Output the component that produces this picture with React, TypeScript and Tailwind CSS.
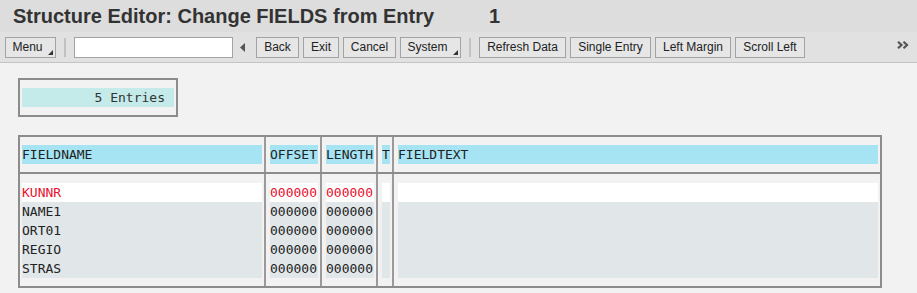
import React from "react";

const mono = { fontFamily: '"DejaVu Sans Mono", "Liberation Mono", monospace' };
const sans = { fontFamily: '"Liberation Sans", Arial, sans-serif' };

function Btn({ label, w, menu }: { label: string; w: number; menu?: boolean }) {
  return (
    <div
      className="relative flex h-[21px] shrink-0 items-center justify-center border border-[#a3a3a3] bg-[#e6e6e6] text-[12px] text-[#222]"
      style={{ width: w }}
    >
      <span className={menu ? "pr-[6px]" : ""}>{label}</span>
      {menu && (
        <svg className="absolute bottom-[2px] right-[2px]" width="5" height="5" viewBox="0 0 5 5">
          <polygon points="5,0 5,5 0,5" fill="#333" />
        </svg>
      )}
    </div>
  );
}

function Sep() {
  return <div className="mx-[8px] h-[19px] w-[2px] shrink-0 bg-[#c2c2c2]" />;
}

const rows = ["KUNNR", "NAME1", "ORT01", "REGIO", "STRAS"];

export default function App() {
  const cols = [
    { w: 246, pl: 2, key: "FIELDNAME" },
    { w: 56, pl: 4, key: "OFFSET" },
    { w: 56, pl: 4, key: "LENGTH" },
    { w: 16, pl: 4, key: "T" },
    { w: 486, pl: 4, key: "FIELDTEXT" },
  ];
  const cellVal = (ci: number, r: string) => {
    if (ci === 0) return r;
    if (ci === 1 || ci === 2) return "000000";
    return "";
  };
  return (
    <div className="h-[293px] w-[917px] overflow-hidden bg-[#f2f2f2]" style={sans}>
      {/* Title */}
      <div className="flex h-[32px] items-center bg-[#dddddd] pl-[13px] text-[20px] font-bold text-[#333]">
        <div className="w-[476px] whitespace-nowrap">Structure Editor: Change FIELDS from Entry</div>
        <div>1</div>
      </div>
      {/* Toolbar */}
      <div className="flex h-[31px] items-center border-b border-[#c4c4c4] bg-[#e1e1e1] pl-[5px] pr-[8px]">
        <Btn label="Menu" w={51} menu />
        <Sep />
        <div className="h-[21px] w-[159px] shrink-0 border border-[#a3a3a3] bg-white" />
        <svg className="ml-[7px] shrink-0" width="5" height="9" viewBox="0 0 5 9">
          <polygon points="5,0 5,9 0,4.5" fill="#555" />
        </svg>
        <div className="ml-[11px] flex gap-[4px]">
          <Btn label="Back" w={43} />
          <Btn label="Exit" w={36} />
          <Btn label="Cancel" w={53} />
          <Btn label="System" w={61} menu />
        </div>
        <Sep />
        <div className="flex gap-[4px]">
          <Btn label="Refresh Data" w={87} />
          <Btn label="Single Entry" w={81} />
          <Btn label="Left Margin" w={76} />
          <Btn label="Scroll Left" w={70} />
        </div>
        <svg className="mb-[5px] ml-auto shrink-0" width="12" height="8" viewBox="0 0 12 8">
          <polyline points="1,0.8 4.5,4 1,7.2" fill="none" stroke="#555" strokeWidth="2.2" />
          <polyline points="6.5,0.8 10,4 6.5,7.2" fill="none" stroke="#555" strokeWidth="2.2" />
        </svg>
      </div>
      {/* Content */}
      <div className="pl-[18px] pt-[15px]" style={mono}>
        <div className="w-[160px] border-2 border-[#8c8c8c] px-[2px] py-[8px]">
          <div className="h-[19px] bg-[#c4eaea] pr-[9px] text-right text-[13px] leading-[19px] text-[#333]">
            5 Entries
          </div>
        </div>
        <div className="mt-[18px] w-[864px] border-2 border-[#8c8c8c]">
          {/* Header */}
          <div className="flex border-b-2 border-[#8c8c8c]">
            {cols.map((c, i) => (
              <div
                key={c.key}
                className={`py-[8px] pr-[2px] ${i < cols.length - 1 ? "border-r-2 border-[#9a9a9a]" : ""}`}
                style={{ width: c.w, paddingLeft: c.pl }}
              >
                <div className="h-[19px] overflow-hidden whitespace-nowrap bg-[#a6e4f4] text-[13px] leading-[19px] text-[#222]">
                  {c.key}
                </div>
              </div>
            ))}
          </div>
          {/* Body */}
          <div className="flex">
            {cols.map((c, i) => (
              <div
                key={c.key}
                className={`pb-[8px] pr-[2px] pt-[9px] ${i < cols.length - 1 ? "border-r-2 border-[#9a9a9a]" : ""}`}
                style={{ width: c.w, paddingLeft: c.pl }}
              >
                {rows.map((r, ri) => (
                  <div
                    key={r}
                    className={`h-[19px] overflow-hidden whitespace-nowrap text-[13px] leading-[19px] ${
                      ri === 0 ? "bg-white text-[#e8102e]" : "bg-[#e1e6e9] text-[#222]"
                    }`}
                  >
                    {cellVal(i, r)}
                  </div>
                ))}
              </div>
            ))}
          </div>
        </div>
      </div>
    </div>
  );
}
